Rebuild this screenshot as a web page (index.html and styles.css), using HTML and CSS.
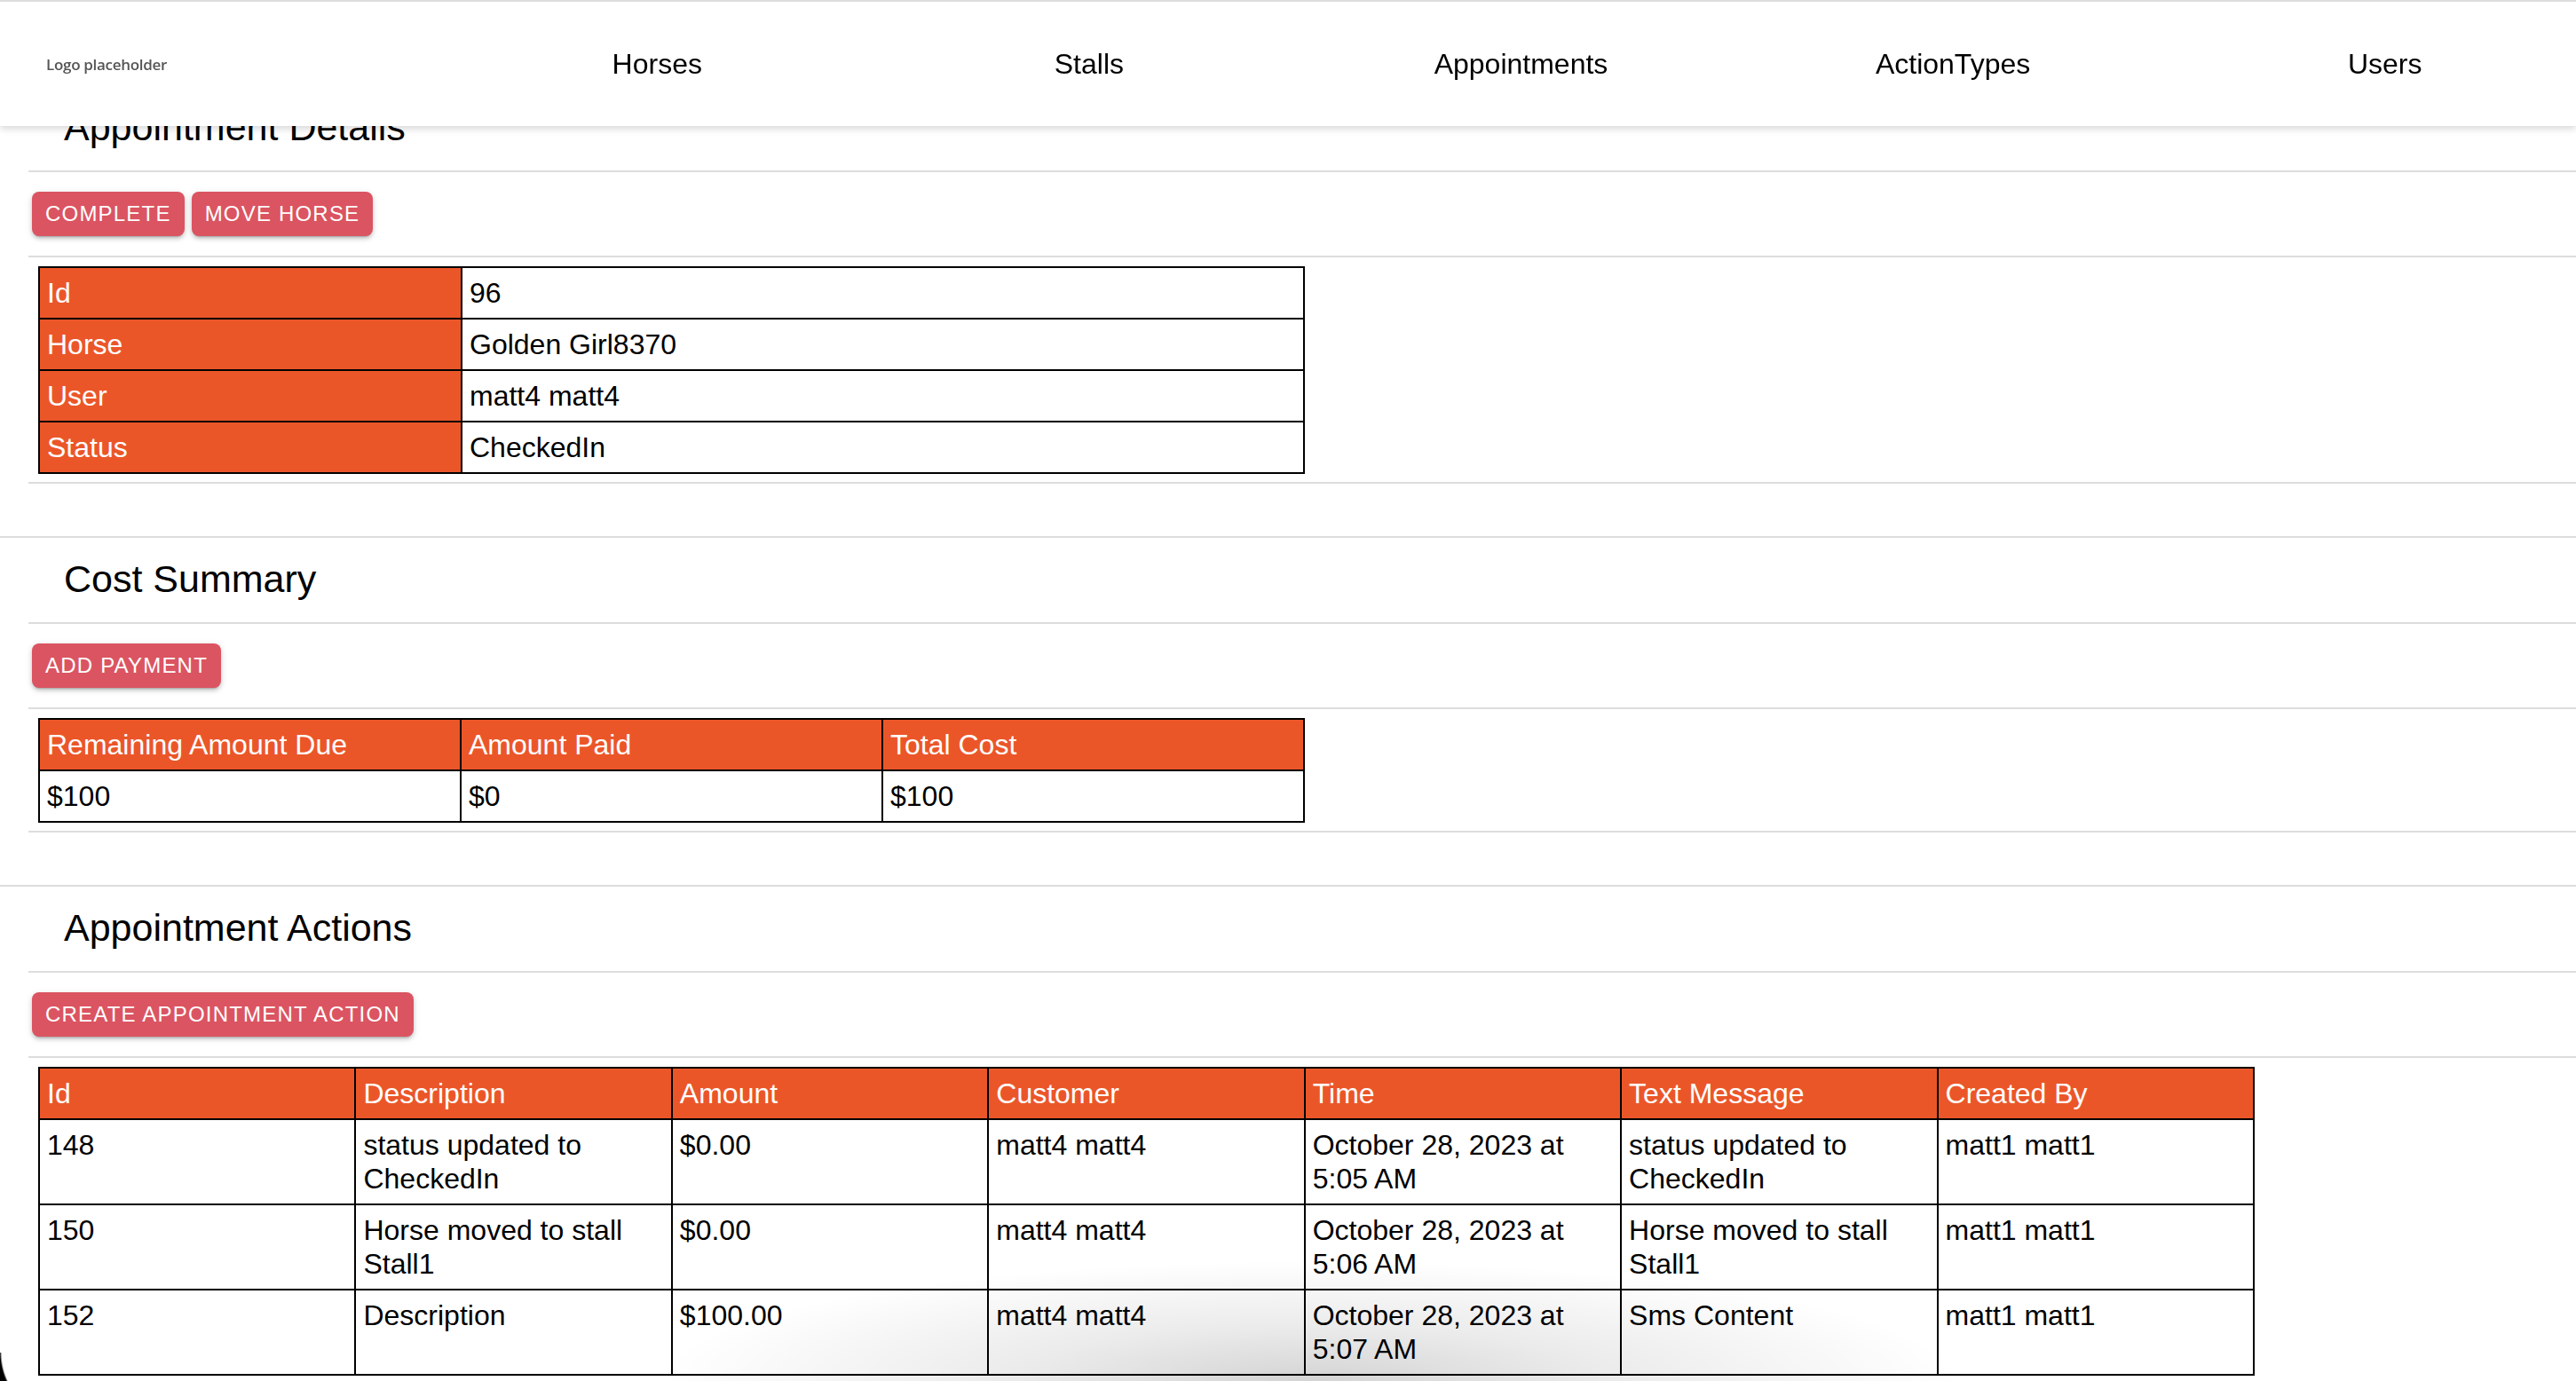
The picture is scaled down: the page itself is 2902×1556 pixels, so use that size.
FILE: index.html
```html
<!DOCTYPE html>
<html lang="en">
<head>
<meta charset="utf-8">
<title>Appointment Details</title>
<link rel="stylesheet" href="styles.css">
</head>
<body>
<header class="topbar">
  <div class="logo">Logo placeholder</div>
  <nav class="nav">
    <a class="nav-link" href="#">Horses</a>
    <a class="nav-link" href="#">Stalls</a>
    <a class="nav-link" href="#">Appointments</a>
    <a class="nav-link" href="#">ActionTypes</a>
    <a class="nav-link" href="#">Users</a>
  </nav>
</header>

<main class="page">
  <section class="card">
    <h2 class="card-title">Appointment Details</h2>
    <div class="actions">
      <button class="btn">Complete</button>
      <button class="btn">Move Horse</button>
    </div>
    <div class="table-wrap">
      <table class="grid details">
        <colgroup><col class="label-col"><col></colgroup>
        <tbody>
          <tr><th>Id</th><td>96</td></tr>
          <tr><th>Horse</th><td>Golden Girl8370</td></tr>
          <tr><th>User</th><td>matt4 matt4</td></tr>
          <tr><th>Status</th><td>CheckedIn</td></tr>
        </tbody>
      </table>
    </div>
  </section>

  <section class="card">
    <h2 class="card-title">Cost Summary</h2>
    <div class="actions">
      <button class="btn">Add Payment</button>
    </div>
    <div class="table-wrap">
      <table class="grid cost">
        <thead>
          <tr><th>Remaining Amount Due</th><th>Amount Paid</th><th>Total Cost</th></tr>
        </thead>
        <tbody>
          <tr><td>$100</td><td>$0</td><td>$100</td></tr>
        </tbody>
      </table>
    </div>
  </section>

  <section class="card">
    <h2 class="card-title">Appointment Actions</h2>
    <div class="actions">
      <button class="btn">Create Appointment Action</button>
    </div>
    <div class="table-wrap">
      <table class="grid log">
        <thead>
          <tr><th>Id</th><th>Description</th><th>Amount</th><th>Customer</th><th>Time</th><th>Text Message</th><th>Created By</th></tr>
        </thead>
        <tbody>
          <tr><td>148</td><td>status updated to CheckedIn</td><td>$0.00</td><td>matt4 matt4</td><td>October 28, 2023 at 5:05 AM</td><td>status updated to CheckedIn</td><td>matt1 matt1</td></tr>
          <tr><td>150</td><td>Horse moved to stall Stall1</td><td>$0.00</td><td>matt4 matt4</td><td>October 28, 2023 at 5:06 AM</td><td>Horse moved to stall Stall1</td><td>matt1 matt1</td></tr>
          <tr><td>152</td><td>Description</td><td>$100.00</td><td>matt4 matt4</td><td>October 28, 2023 at 5:07 AM</td><td>Sms Content</td><td>matt1 matt1</td></tr>
        </tbody>
      </table>
    </div>
  </section>
</main>

<div class="dock-shade"></div>
<div class="window-corner"></div>
</body>
</html>
```

FILE: styles.css
```css
html, body {
  margin: 0;
  padding: 0;
  background: #ffffff;
  color: #000000;
  font-family: "Liberation Sans", Arial, Helvetica, sans-serif;
}

body {
  position: relative;
  overflow-x: hidden;
}

/* ---------- top navigation ---------- */
.topbar {
  position: fixed;
  top: 0;
  left: 0;
  right: 0;
  z-index: 10;
  height: 140px;
  border-top: 2px solid #dddddd;
  background: #ffffff;
  display: flex;
  align-items: center;
  overflow: hidden;
  box-shadow: 0 3px 8px rgba(0, 0, 0, 0.16);
}

.logo {
  flex: 0 0 497px;
  box-sizing: border-box;
  padding-left: 52px;
  font-family: "Open Sans", "Noto Sans", sans-serif;
  font-weight: 600;
  font-size: 17px;
  letter-spacing: -0.3px;
  color: #555555;
}

.nav {
  flex: 0 0 auto;
  display: grid;
  grid-template-columns: repeat(5, 486.6px);
}

.nav-link {
  text-align: center;
  font-size: 32px;
  color: #000000;
  text-decoration: none;
}

/* ---------- page ---------- */
.page {
  padding-top: 95px;
}

.card {
  border-top: 2px solid #dddddd;
  padding: 0 0 59px 32px;
}

.card-title {
  margin: 0;
  padding: 21px 0 24px 40px;
  font-size: 43px;
  line-height: 50px;
  font-weight: normal;
  border-bottom: 2px solid #dddddd;
}

.actions {
  display: flex;
  gap: 8px;
  padding: 22px 0 22px 4px;
  border-bottom: 2px solid #dddddd;
}

.btn {
  height: 50px;
  padding: 0 15px;
  border: 0;
  border-radius: 8px;
  background: #db5461;
  color: #ffffff;
  font-family: "Liberation Sans", Arial, sans-serif;
  font-size: 24px;
  letter-spacing: 1.2px;
  text-transform: uppercase;
  box-shadow: 0 4px 2px -3px rgba(0, 0, 0, 0.2),
              0 3px 4px 0 rgba(0, 0, 0, 0.14),
              0 2px 8px 0 rgba(0, 0, 0, 0.12);
  cursor: pointer;
}

.table-wrap {
  padding: 10px 0 9px 11px;
  border-bottom: 2px solid #dddddd;
}

/* ---------- tables ---------- */
.grid {
  border-collapse: collapse;
  table-layout: fixed;
  font-size: 32px;
  line-height: 38px;
}

.grid th,
.grid td {
  border: 2px solid #000000;
  padding: 9px 10px 9px 8px;
  text-align: left;
  vertical-align: top;
  font-weight: normal;
}

.grid th {
  background: #eb5629;
  color: #ffffff;
}

.details,
.cost {
  width: 1427px;
}

.label-col {
  width: 476px;
}

.log {
  width: 2497px;
}

/* ---------- screen artefacts over the page ---------- */
.dock-shade {
  position: absolute;
  left: 740px;
  top: 1420px;
  width: 1470px;
  height: 136px;
  pointer-events: none;
  background: radial-gradient(ellipse 50% 100% at 50% 100%,
              rgba(0, 0, 0, 0.17) 0%,
              rgba(0, 0, 0, 0.08) 45%,
              rgba(0, 0, 0, 0) 100%);
}

.window-corner {
  position: absolute;
  left: 0;
  top: 1524px;
  width: 40px;
  height: 32px;
  pointer-events: none;
  background: radial-gradient(circle 77px at 77px 0, rgba(0, 0, 0, 0) 75px, #000000 77px);
}
```
